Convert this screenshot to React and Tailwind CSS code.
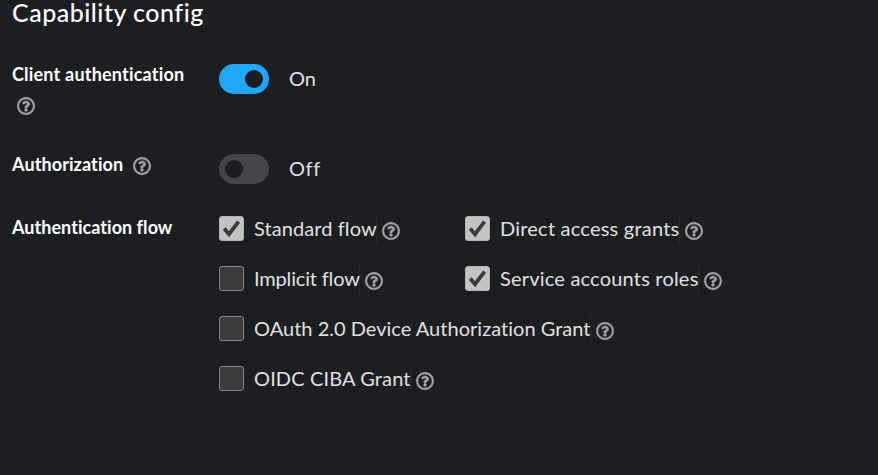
import { FaRegQuestionCircle } from "react-icons/fa";

function Help({ className = "" }) {
  return (
    <FaRegQuestionCircle
      className={`size-[18px] shrink-0 overflow-visible stroke-current stroke-[14] text-[#a3a3a6] ${className}`}
    />
  );
}

function Label({ children, className = "" }) {
  return (
    <span className={`whitespace-nowrap text-[18px] leading-[26px] font-bold text-white ${className}`}>
      {children}
    </span>
  );
}

function Switch({ on }) {
  return (
    <span
      role="switch"
      aria-checked={on}
      className={`flex h-[30px] w-[50px] shrink-0 items-center rounded-full px-1.5 ${
        on ? "justify-end bg-[#1fa7f8]" : "justify-start bg-[#444548]"
      }`}
    >
      <span className="size-[18px] rounded-full bg-[#1b1d21]" />
    </span>
  );
}

function CheckItem({ label, checked, textClass }) {
  return (
    <div className="flex h-[30px] items-center">
      <span
        role="checkbox"
        aria-checked={!!checked}
        className={`-mt-px flex size-[25px] shrink-0 items-center justify-center rounded-[3px] border ${
          checked ? "border-[#b4b4b4] bg-[#c3c3c3]" : "border-[#858585] bg-[#3b3b3b]"
        }`}
      >
        {checked && (
          <svg viewBox="0 0 23 23" className="size-[23px]" fill="none" stroke="#3b3b3b" strokeWidth="3.8">
            <path d="M4.2 11.6L9 17.2L18.6 4.6" />
          </svg>
        )}
      </span>
      <span
        className={`ml-[10px] flex h-[30px] items-center border-r border-[#292a2e] text-[20px] leading-[28px] whitespace-nowrap text-[#e0e0e0] pb-0.5 ${textClass}`}
      >
        {label}
      </span>
      <Help className="mt-1 ml-[5px]" />
    </div>
  );
}

export default function App() {
  return (
    <main className="flex h-[475px] w-[878px] flex-col overflow-hidden bg-[#1c1e21] pl-3 font-['Lato',sans-serif]">
      <h1 className="h-16 text-[25px] leading-[24px] font-medium tracking-[0.5px] text-white">Capability config</h1>
      <section className="flex h-[90px]">
        <div className="w-[207px] shrink-0">
          <Label className="block h-[33px] -mt-[3px] tracking-[0.2px]">Client authentication</Label>
          <Help className="mt-[3px] ml-[5px]" />
        </div>
        <Switch on />
        <span className="ml-5 text-[20px] leading-[28px] text-[#e0e0e0]">On</span>
      </section>
      <section className="flex h-[60px]">
        <div className="flex w-[207px] shrink-0 items-start">
          <Label className="w-[121px] -mt-[3px] tracking-[0.1px]">Authorization</Label>
          <Help className="mt-[3px]" />
        </div>
        <Switch on={false} />
        <span className="ml-5 text-[20px] leading-[28px] tracking-[0.6px] text-[#e0e0e0]">Off</span>
      </section>
      <section className="flex">
        <Label className="w-[207px] shrink-0 tracking-[0.04px]">Authentication flow</Label>
        <div className="grid grid-cols-[246px_auto] gap-y-5">
          <CheckItem label="Standard flow" checked textClass="w-[123px] tracking-[0.08px]" />
          <CheckItem label="Direct access grants" checked textClass="w-[180px] tracking-[0.22px]" />
          <CheckItem label="Implicit flow" textClass="w-[106px] tracking-[-0.17px]" />
          <CheckItem label="Service accounts roles" checked textClass="w-[199px] tracking-[0.2px]" />
          <div className="col-span-2">
            <CheckItem label="OAuth 2.0 Device Authorization Grant" textClass="w-[337px] tracking-[0.02px]" />
          </div>
          <div className="col-span-2">
            <CheckItem label="OIDC CIBA Grant" textClass="w-[157px] tracking-[0.13px]" />
          </div>
        </div>
      </section>
    </main>
  );
}
